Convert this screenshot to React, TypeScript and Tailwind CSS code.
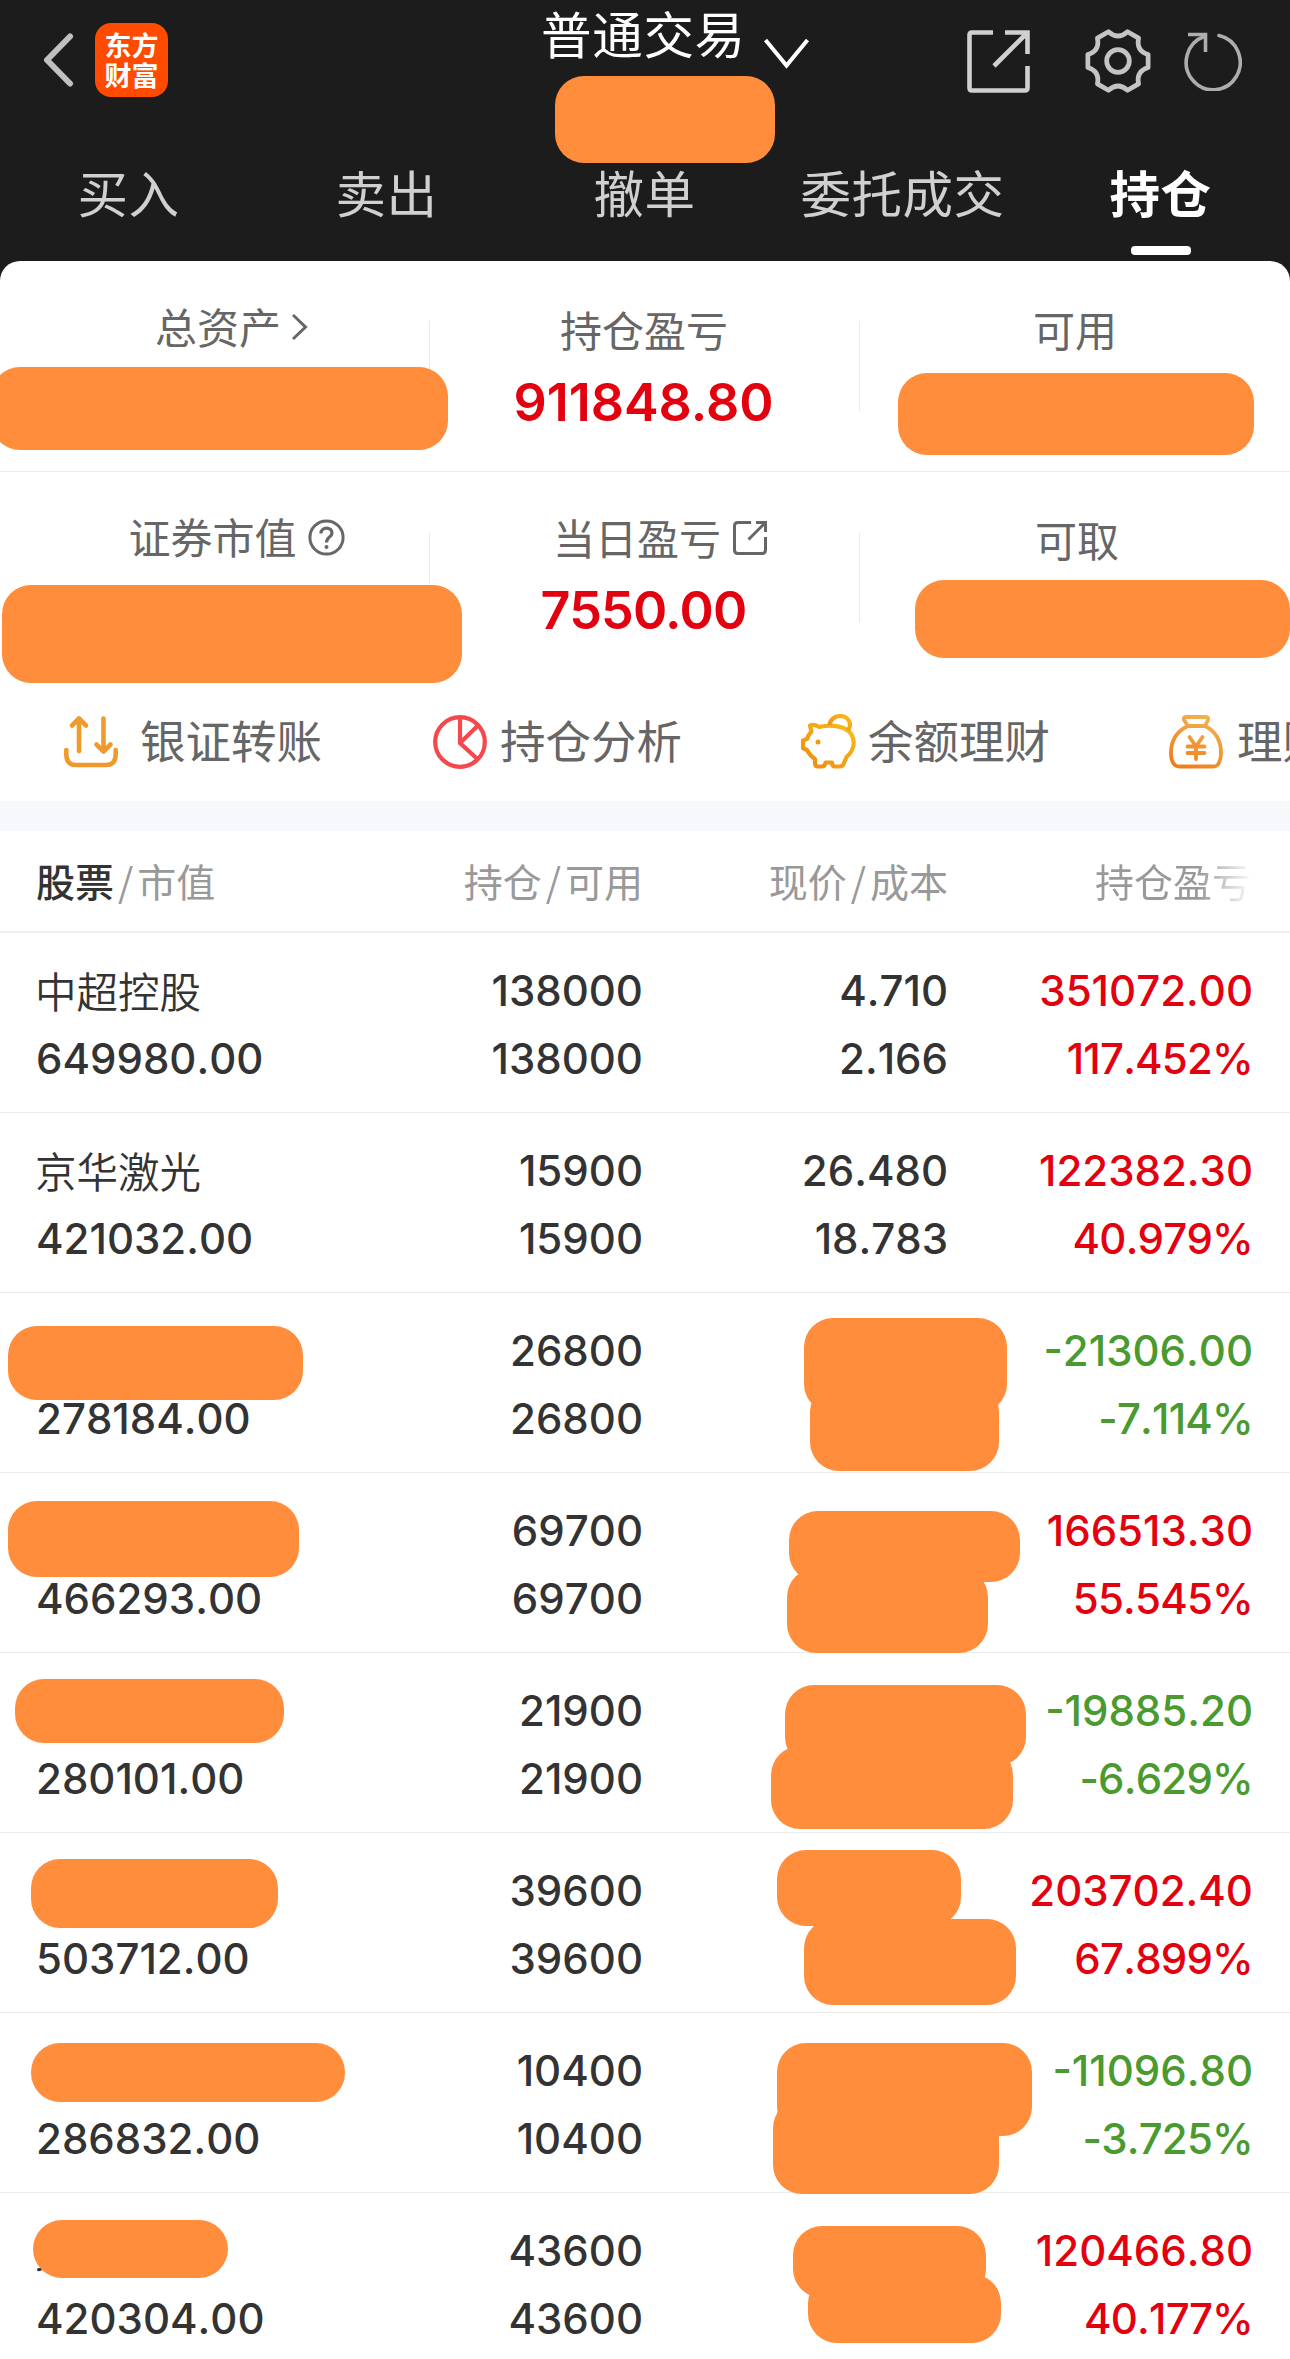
import type { ReactNode } from "react";

const TABS = ["买入", "卖出", "撤单", "委托成交", "持仓"];

type Holding = {
  name?: string;
  value: string;
  amount: string;
  price?: string;
  cost?: string;
  profit: string;
  percent: string;
  masks?: string[];
};

const HOLDINGS: Holding[] = [
  {
    name: "中超控股",
    value: "649980.00",
    amount: "138000",
    price: "4.710",
    cost: "2.166",
    profit: "351072.00",
    percent: "117.452%",
  },
  {
    name: "京华激光",
    value: "421032.00",
    amount: "15900",
    price: "26.480",
    cost: "18.783",
    profit: "122382.30",
    percent: "40.979%",
  },
  {
    value: "278184.00",
    amount: "26800",
    profit: "-21306.00",
    percent: "-7.114%",
    masks: [
      "left-[8px] top-[33px] w-[295px] h-[74px]",
      "left-[804px] top-[25px] w-[203px] h-[95px]",
      "left-[810px] top-[90px] w-[189px] h-[88px]",
    ],
  },
  {
    value: "466293.00",
    amount: "69700",
    profit: "166513.30",
    percent: "55.545%",
    masks: [
      "left-[8px] top-[28px] w-[291px] h-[76px]",
      "left-[789px] top-[38px] w-[231px] h-[71px]",
      "left-[787px] top-[95px] w-[201px] h-[85px]",
    ],
  },
  {
    value: "280101.00",
    amount: "21900",
    profit: "-19885.20",
    percent: "-6.629%",
    masks: [
      "left-[15px] top-[26px] w-[269px] h-[64px]",
      "left-[785px] top-[32px] w-[241px] h-[81px]",
      "left-[771px] top-[93px] w-[242px] h-[83px]",
    ],
  },
  {
    value: "503712.00",
    amount: "39600",
    profit: "203702.40",
    percent: "67.899%",
    masks: [
      "left-[31px] top-[26px] w-[247px] h-[69px]",
      "left-[777px] top-[17px] w-[184px] h-[76px]",
      "left-[804px] top-[86px] w-[212px] h-[86px]",
    ],
  },
  {
    value: "286832.00",
    amount: "10400",
    profit: "-11096.80",
    percent: "-3.725%",
    masks: [
      "left-[31px] top-[30px] w-[314px] h-[59px]",
      "left-[777px] top-[30px] w-[255px] h-[93px]",
      "left-[773px] top-[86px] w-[226px] h-[95px]",
    ],
  },
  {
    value: "420304.00",
    amount: "43600",
    profit: "120466.80",
    percent: "40.177%",
    masks: [
      "left-[33px] top-[27px] w-[195px] h-[58px]",
      "left-[793px] top-[33px] w-[193px] h-[72px]",
      "left-[808px] top-[81px] w-[193px] h-[69px]",
    ],
  },
];

function Mask({ className }: { className: string }) {
  return (
    <span
      className={`absolute z-10 rounded-[29px] bg-[#ff8d3c] ${className}`}
    />
  );
}

function ShareIcon() {
  return (
    <svg width="63" height="63" viewBox="0 0 63 63" fill="none" stroke="#d0d0d0" strokeWidth="4.6">
      <path d="M26 2.5H5Q2.5 2.5 2.5 5V58Q2.5 60.5 5 60.5H58Q60.5 60.5 60.5 58V36" />
      <path d="M38 2.5H60.5V24M60 3L27 36" />
    </svg>
  );
}

function GearIcon() {
  return (
    <svg width="68" height="68" viewBox="-36 -36 72 72" fill="none" stroke="#c4c4c4" strokeWidth="5" strokeLinejoin="round">
      <path d="M10.1 -31L21.8 -24.2Q19 -11 31.9 -6.8V6.8Q19 11 21.8 24.2L10.1 31Q0 22 -10.1 31L-21.8 24.2Q-19 11 -31.9 6.8V-6.8Q-19 -11 -21.8 -24.2L-10.1 -31Q0 -22 10.1 -31Z" />
      <circle r="12" />
    </svg>
  );
}

function RefreshIcon() {
  return (
    <svg width="58" height="60" viewBox="0 0 58 60" fill="none" stroke="#adadad" strokeWidth="3.6">
      <path d="M35 4.5A27 27.5 0 1 1 20 5.5" strokeLinecap="round" />
      <path d="M4 3.5H21.5V21" />
    </svg>
  );
}

function Header() {
  return (
    <header className="flex h-[261px] flex-col bg-[#1c1c1c]">
      <div className="relative flex h-[120px] items-center pr-12 pl-[43px]">
        <svg width="31" height="54" viewBox="0 0 31 54" fill="none" stroke="#c0c0c0" strokeWidth="6" strokeLinecap="round" strokeLinejoin="round">
          <path d="M27 3.5L4 27L27 50.5" />
        </svg>
        <div className="ml-[21px] flex h-[74px] w-[73px] flex-col items-center justify-center rounded-[16px] bg-[#ff4a00] text-[27px] leading-[30px] font-bold text-white">
          <span>东方</span>
          <span>财富</span>
        </div>
        <div className="ml-[373px] flex h-[69px] gap-[17px] self-start">
          <span className="text-[50.5px] leading-[65px] tracking-[0.7px] text-white">
            普通交易
          </span>
          <svg className="mt-[38px]" width="47" height="32" viewBox="0 0 47 32" fill="none" stroke="#fff" strokeWidth="4">
            <path d="M2.5 2L23.5 27.5L44.5 2" />
          </svg>
        </div>
        <div className="ml-auto flex items-center pt-0.5">
          <ShareIcon />
          <span className="ml-[54px]">
            <GearIcon />
          </span>
          <span className="ml-8">
            <RefreshIcon />
          </span>
        </div>
        <Mask className="left-[555px] top-[76px] h-[87px] w-[220px]" />
      </div>
      <nav className="grid flex-1 grid-cols-5">
        {TABS.map((tab, i) => {
          const active = i === TABS.length - 1;
          return (
            <div key={tab} className="flex flex-col items-center pt-9">
              <span
                className={`-ml-px text-[50.5px] leading-[70px] tracking-[0.5px] ${
                  active ? "font-bold text-white" : "text-[#d0d0d0]"
                }`}
              >
                {tab}
              </span>
              {active && (
                <span className="mt-5 h-[9px] w-[60px] rounded-[4px] bg-white" />
              )}
            </div>
          );
        })}
      </nav>
    </header>
  );
}

function Stat({
  label,
  value,
  divider,
  className = "",
  valueClassName = "",
}: {
  label: ReactNode;
  value?: string;
  divider?: boolean;
  className?: string;
  valueClassName?: string;
}) {
  return (
    <div className="relative flex flex-1 flex-col items-center">
      <div
        className={`flex h-[60px] items-center text-[42px] leading-[60px] text-[#666] ${className}`}
      >
        {label}
      </div>
      {value && (
        <div
          className={`mt-[14px] pr-[3px] font-[Inter] text-[52px] leading-[60px] font-semibold text-[#e3000f] ${valueClassName}`}
        >
          {value}
        </div>
      )}
      {divider && (
        <span className="absolute top-[60px] right-0 h-[90px] w-px bg-[#ececec]" />
      )}
    </div>
  );
}

function Summary() {
  return (
    <section>
      <div className="relative flex h-[211px] border-b border-[#ececec]">
        <Stat
          divider
          className="mt-[35px] pl-[33px]"
          label={
            <>
              总资产
              <svg className="mt-0.5 ml-2.5" width="17" height="28" viewBox="0 0 17 28" fill="none" stroke="#666" strokeWidth="3">
                <path d="M2 2L14.5 14L2 26" />
              </svg>
            </>
          }
        />
        <Stat
          divider
          className="mt-[38px] pr-0.5"
          label="持仓盈亏"
          value="911848.80"
        />
        <Stat className="mt-[38px]" label="可用" />
        <Mask className="-left-[9px] top-[106px] h-[83px] w-[457px]" />
        <Mask className="left-[898px] top-[112px] h-[82px] w-[356px]" />
      </div>
      <div className="relative flex h-[210px]">
        <Stat
          divider
          className="mt-[34px] pl-[43px]"
          label={
            <>
              证券市值
              <svg className="mt-0.5 ml-[11px]" width="37" height="37" viewBox="0 0 37 37" fill="none" stroke="#666" strokeWidth="3">
                <circle cx="18.5" cy="18.5" r="16.6" />
                <path d="M13 14.5C13 7.5 24 7.5 24 14C24 18 18.5 18 18.5 23.5" strokeWidth="3.2" />
                <circle cx="18.5" cy="28" r="2" fill="#666" stroke="none" />
              </svg>
            </>
          }
        />
        <Stat
          divider
          className="mt-[35px] pl-[30px]"
          value="7550.00"
          valueClassName="tracking-[-0.8px]"
          label={
            <>
              当日盈亏
              <svg className="mt-0.5 ml-3" width="34" height="34" viewBox="0 0 34 34" fill="none" stroke="#666" strokeWidth="3">
                <path d="M18 1.5H5Q1.5 1.5 1.5 5V29Q1.5 32.5 5 32.5H29Q32.5 32.5 32.5 29V16" />
                <path d="M23 1.5H32.5V11M32 2L15.5 18.5" />
              </svg>
            </>
          }
        />
        <Stat className="mt-[37px] pl-1" label="可取" />
        <Mask className="left-[2px] top-[113px] h-[98px] w-[460px]" />
        <Mask className="left-[915px] top-[108px] h-[78px] w-[375px]" />
      </div>
    </section>
  );
}

function TransferIcon() {
  return (
    <svg width="54" height="54" viewBox="0 0 54 54" fill="none" stroke="#f09a2e" strokeWidth="4.6" strokeLinecap="round" strokeLinejoin="round">
      <path d="M15 36V4M8 10.5L15 3.5L22 10.5M39.5 3.5V36M32.5 29.5L39.5 36.5L46.5 29.5" />
      <path d="M2.3 35V39Q2.3 50 12 50H42Q51.7 50 51.7 39V35" />
    </svg>
  );
}

function PieIcon() {
  return (
    <svg width="54" height="54" viewBox="0 0 54 54" fill="none" stroke="#f5484c" strokeWidth="4.2">
      <circle cx="27" cy="27" r="24.8" />
      <path d="M27 2V28L45 44.5M27 28L45.5 10" />
    </svg>
  );
}

function PigIcon() {
  return (
    <svg width="55" height="55" viewBox="0 0 55 55" fill="none" stroke="url(#pig)" strokeWidth="4.2" strokeLinejoin="round">
      <defs>
        <linearGradient id="pig" x1="1" y1="0" x2="0" y2="1">
          <stop offset="0" stopColor="#f8be14" />
          <stop offset="1" stopColor="#ee8a14" />
        </linearGradient>
      </defs>
      <path d="M18 13C15 10.5 12 10.5 9 11.5L10.5 17.5C8 20 7 22 6 25L2 26.5V34L6 36C8 40 11 43 14 45V49Q14 52.5 17 52.5H21Q24 52.5 24.5 48.5H31Q31 52.5 34 52.5H39Q42 52.5 43 49L45.5 43C55 35 55 22 46 16C39 11 27 11 18 13Z" />
      <path d="M28.5 11C30 -1 49 -1 49 11C49 13 48 15 47 16.5" />
      <circle cx="17" cy="28" r="2.5" fill="#f09a14" stroke="none" />
    </svg>
  );
}

function MoneyBagIcon() {
  return (
    <svg width="54" height="54" viewBox="0 0 54 54" fill="none" stroke="url(#bag)" strokeWidth="3.8" strokeLinejoin="round" strokeLinecap="round">
      <defs>
        <linearGradient id="bag" gradientUnits="userSpaceOnUse" x1="40" y1="0" x2="14" y2="54">
          <stop offset="0" stopColor="#f3b352" />
          <stop offset="1" stopColor="#ef7d1a" />
        </linearGradient>
      </defs>
      <path d="M17 2H37Q40 2 39 5L36 11H19L15 5Q14 2 17 2Z" />
      <path d="M19 11C6 17 2 28 2 38C2 44 3.5 48 6 50Q7.5 51.5 10 51.5H44Q47 51.5 48.5 50C51 47 52 44 52 38C52 28 48 17 36 11" />
      <path d="M20.5 22L27 31.5L33.5 22M27 31.5V44M18.5 31.5H35.5M18.5 38H35.5" />
    </svg>
  );
}

function Actions() {
  return (
    <section className="flex h-[119px] overflow-hidden pl-16 text-[45.5px] leading-[114px] whitespace-nowrap text-[#666]">
      <div className="flex w-[369px] shrink-0 items-center gap-[22px]">
        <TransferIcon />
        <span className="h-[119px]">银证转账</span>
      </div>
      <div className="flex w-[368px] shrink-0 items-center gap-[13px]">
        <PieIcon />
        <span className="h-[119px]">持仓分析</span>
      </div>
      <div className="flex w-[368px] shrink-0 items-center gap-3">
        <PigIcon />
        <span className="h-[119px]">余额理财</span>
      </div>
      <div className="flex shrink-0 items-center gap-3.5">
        <MoneyBagIcon />
        <span className="h-[119px]">理财</span>
      </div>
    </section>
  );
}

const COLUMNS =
  "grid grid-cols-[331px_276px_305px_305px] pl-9 text-right whitespace-nowrap";

function TableHead() {
  return (
    <div
      className={`${COLUMNS} h-[102px] border-b-2 border-[#f0f0f0] text-[39px] leading-[98px] text-[#999]`}
    >
      <div className="text-left">
        <span className="font-medium text-[#333]">股票</span>
        <span className="mx-1">/</span>市值
      </div>
      <div>
        持仓<span className="mx-1">/</span>可用
      </div>
      <div>
        现价<span className="mx-1">/</span>成本
      </div>
      <div className="bg-linear-to-r from-[#999] from-82% to-transparent bg-clip-text pr-0.5 text-transparent">
        持仓盈亏
      </div>
    </div>
  );
}

function HoldingRow({ item }: { item: Holding }) {
  const color = item.profit.startsWith("-") ? "text-[#4a9a30]" : "text-[#e3000f]";
  return (
    <div
      className={`${COLUMNS} relative h-[180px] border-b border-[#ececec] pt-6 font-[Inter] text-[42px] leading-[68px] font-[540] text-[#333] [font-kerning:none]`}
    >
      <div className="text-left">
        <div className="-ml-px h-[68px] font-['Noto_Sans_CJK_SC'] text-[41.5px] leading-[66px] font-[350]">
          {item.name}
        </div>
        <div>{item.value}</div>
      </div>
      <div>
        <div>{item.amount}</div>
        <div>{item.amount}</div>
      </div>
      <div>
        <div>{item.price}</div>
        <div>{item.cost}</div>
      </div>
      <div className={color}>
        <div>{item.profit}</div>
        <div className="tracking-[-0.8px]">{item.percent}</div>
      </div>
      {item.masks?.map((mask) => (
        <Mask key={mask} className={mask} />
      ))}
    </div>
  );
}

export default function App() {
  return (
    <div className="h-[2359px] w-[1290px] overflow-hidden bg-[#1c1c1c] font-['Noto_Sans_CJK_SC',sans-serif]">
      <Header />
      <main className="relative h-[2098px] overflow-hidden rounded-t-[20px] bg-white">
        <Summary />
        <Actions />
        <div className="h-[30px] bg-[#f7f8fb]" />
        <TableHead />
        {HOLDINGS.map((item) => (
          <HoldingRow key={item.value} item={item} />
        ))}
        {/* stroke end of the last name, peeking out under its mask */}
        <span className="absolute top-[2007px] left-[37px] h-[3px] w-[5px] -rotate-12 rounded-full bg-[#333]" />
      </main>
    </div>
  );
}
